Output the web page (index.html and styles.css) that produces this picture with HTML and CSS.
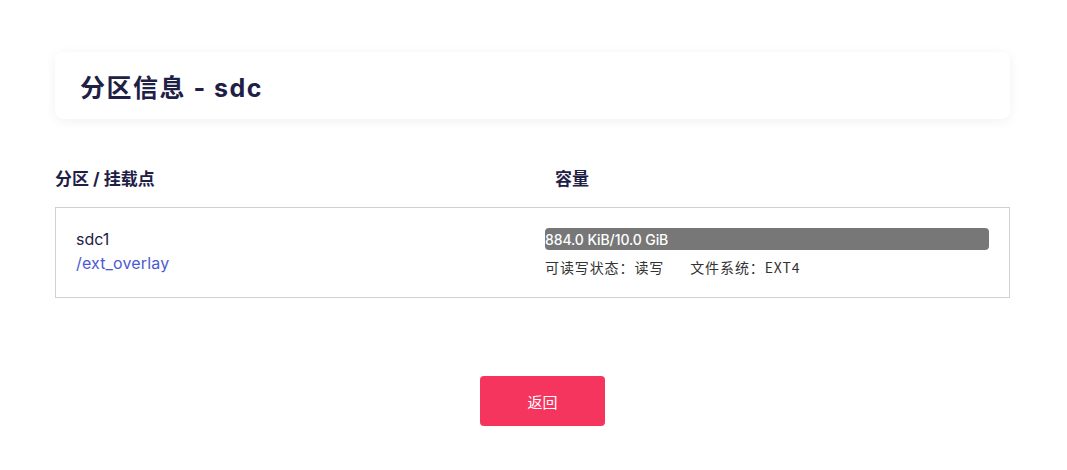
FILE: index.html
```html
<!DOCTYPE html>
<html>
<head>
<meta charset="utf-8">
<link rel="stylesheet" href="styles.css">
</head>
<body>
<div class="page">
  <div class="card">
    <h2 class="title">分区信息 - sdc</h2>
  </div>
  <div class="thead">
    <div class="th th-left">分区 / 挂载点</div>
    <div class="th th-right">容量</div>
  </div>
  <div class="row">
    <div class="cell-left">
      <div class="dev">sdc1</div>
      <div class="mount">/ext_overlay</div>
    </div>
    <div class="cell-right">
      <div class="bar"><span class="bar-text">884.0 KiB/10.0 GiB</span></div>
      <div class="meta"><span class="meta-item">可读写状态：读写</span><span class="meta-item">文件系统：EXT4</span></div>
    </div>
  </div>
  <div class="actions">
    <button class="btn">返回</button>
  </div>
</div>
</body>
</html>
```

FILE: styles.css
```css
html, body {
  margin: 0;
  padding: 0;
  background: #ffffff;
}
body {
  font-family: Inter, "Noto Sans CJK SC", sans-serif;
  color: #1f2046;
}
.page {
  width: 955px;
  margin-left: 55px;
  padding-top: 52px;
}
.card {
  height: 67px;
  background: #fff;
  border-radius: 8px;
  box-shadow: 0 2px 12px rgba(0, 0, 0, 0.06);
  display: flex;
  align-items: center;
  padding-left: 25px;
}
.title {
  margin: 0;
  font-size: 25px;
  font-weight: 700;
  letter-spacing: 1.5px;
  color: #1f2046;
}
.thead {
  display: grid;
  grid-template-columns: 490px 1fr;
  margin-top: 45px;
  height: 26px;
  align-items: center;
}
.th {
  font-size: 17px;
  font-weight: 700;
  color: #1f2046;
}
.th-right {
  padding-left: 10px;
}
.row {
  display: grid;
  grid-template-columns: 489px 1fr;
  margin-top: 17px;
  border: 1px solid #d0d0d0;
  height: 89px;
  box-sizing: content-box;
}
.cell-left {
  padding-left: 20px;
  padding-top: 20px;
}
.dev {
  font-size: 16px;
  line-height: 22px;
  color: #1f2046;
}
.mount {
  font-size: 16px;
  line-height: 26px;
  color: #4a5bd1;
  letter-spacing: 0.15px;
}
.cell-right {
  padding-top: 20px;
  padding-right: 20px;
}
.bar {
  height: 22px;
  background: #777777;
  border-radius: 4px;
  display: flex;
  align-items: center;
}
.bar-text {
  color: #fff;
  font-size: 14px;
  font-weight: 500;
  letter-spacing: -0.1px;
}
.meta {
  margin-top: 8px;
  font-size: 14px;
  letter-spacing: 0.9px;
  line-height: 18px;
  color: #333;
  font-family: "Noto Sans CJK SC", sans-serif;
}
.meta-item + .meta-item {
  margin-left: 26px;
}
.actions {
  display: flex;
  justify-content: center;
  margin-top: 78px;
  padding-left: 20px;
}
.btn {
  width: 125px;
  height: 50px;
  border: none;
  border-radius: 4px;
  background: #f5355e;
  color: #fff;
  font-size: 15px;
  font-family: "Noto Sans CJK SC", sans-serif;
}
```
